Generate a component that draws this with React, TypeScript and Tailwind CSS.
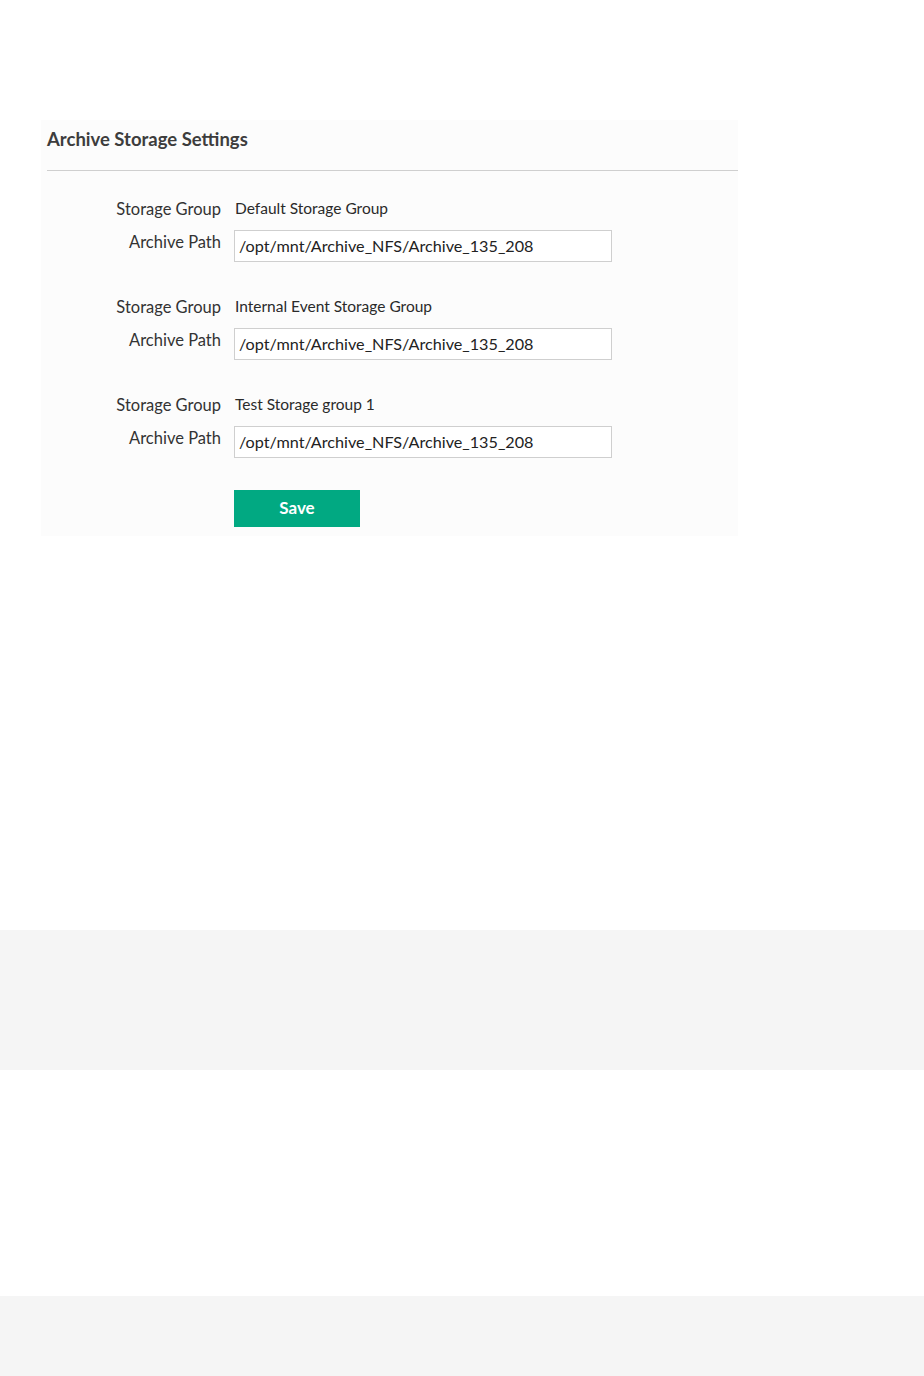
import React from "react";

const groups = [
  "Default Storage Group",
  "Internal Event Storage Group",
  "Test Storage group 1",
];

export default function App() {
  return (
    <div className="w-[924px] h-[1376px] bg-white flex flex-col" style={{ fontFamily: "Lato, 'Open Sans', sans-serif" }}>
      <div className="ml-[41px] mt-[120px] w-[697px] bg-[#fcfcfc] pb-[9px]">
        <div className="ml-[6px] h-[51px] flex items-center border-b border-[#cfcfcf]">
          <h2 className="text-[18.5px] font-bold text-[#3d3d3d] leading-none pb-[11px]">Archive Storage Settings</h2>
        </div>
        <div className="pt-[26px] flex flex-col gap-[33px]">
          {groups.map((g) => (
            <div key={g} className="flex flex-col gap-[11px]">
              <div className="flex items-center h-[22px]">
                <div className="w-[180px] text-right text-[16.5px] text-[#333] leading-[22px] pt-[2px]">Storage Group</div>
                <div className="ml-[14px] text-[15.5px] text-[#2a2a2a] leading-[22px]">{g}</div>
              </div>
              <div className="flex items-start">
                <div className="w-[180px] text-right text-[16.5px] text-[#333] leading-[22px] pt-[1px]">Archive Path</div>
                <input
                  readOnly
                  value="/opt/mnt/Archive_NFS/Archive_135_208"
                  className="ml-[13px] w-[378px] h-[32px] border border-[#cfcfcf] bg-white px-[4px] pb-[1px] text-[16.2px] text-[#222] outline-none"
                  style={{ fontFamily: "Lato, 'Open Sans', sans-serif" }}
                />
              </div>
            </div>
          ))}
          <div className="flex -mt-[1px]">
            <button className="ml-[193px] w-[126px] h-[37px] bg-[#01a982] text-white text-[17px] font-bold pb-[1px]">Save</button>
          </div>
        </div>
      </div>
      <div className="mt-[394px] h-[140px] bg-[#f5f5f5]" />
      <div className="mt-[226px] h-[80px] bg-[#f5f5f5]" />
    </div>
  );
}
